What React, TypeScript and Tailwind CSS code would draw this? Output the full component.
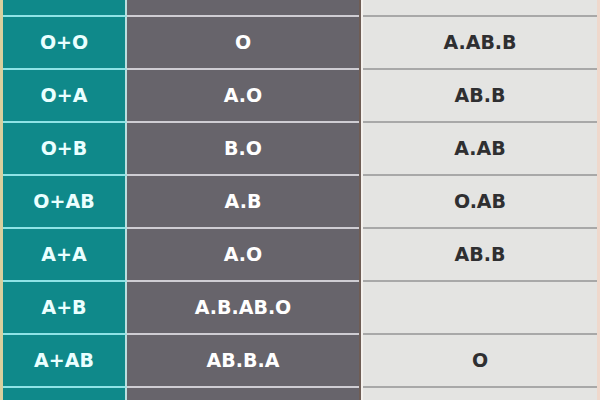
import React from "react";

const rows: [string, string, string][] = [
  ["O+O", "O", "A.AB.B"],
  ["O+A", "A.O", "AB.B"],
  ["O+B", "B.O", "A.AB"],
  ["O+AB", "A.B", "O.AB"],
  ["A+A", "A.O", "AB.B"],
  ["A+B", "A.B.AB.O", ""],
  ["A+AB", "AB.B.A", "O"],
  ["", "", ""],
];

function Row({ r }: { r: [string, string, string] }) {
  return (
    <div className="flex h-[53px] shrink-0">
      <div className="w-[124px] shrink-0 bg-[#0f898a] border-b-2 border-r-2 border-b-[#8fe3e6] border-r-[#b9dfe0] flex items-center justify-center text-[#eaffff]">
        {r[0]}
      </div>
      <div className="w-[232px] shrink-0 bg-[#67646b] border-b-2 border-b-[#cfcdd3] flex items-center justify-center text-white">
        {r[1]}
      </div>
      <div className="w-[2px] shrink-0 bg-[#6e5d55]" />
      <div className="w-[2px] shrink-0 bg-[#f4f1ee]" />
      <div className="flex-1 bg-[#e4e4e2] border-b-2 border-b-[#a8a8a8] flex items-center justify-center text-[#2f2f31]">
        {r[2]}
      </div>
    </div>
  );
}

export default function App() {
  return (
    <div
      className="w-[600px] h-[400px] overflow-hidden bg-[#e4e4e2] flex text-[19px] font-bold"
      style={{ fontFamily: '"DejaVu Sans", Verdana, sans-serif' }}
    >
      <div className="w-[3px] shrink-0 bg-[#d9cf9e]" />
      <div className="flex-1 flex flex-col">
        <div className="h-[17px] shrink-0 overflow-hidden flex flex-col justify-end">
          <Row r={["", "", ""]} />
        </div>
        {rows.map((r, i) => (
          <Row key={i} r={r} />
        ))}
      </div>
      <div className="w-[3px] shrink-0 bg-[#efd8cc]" />
    </div>
  );
}
